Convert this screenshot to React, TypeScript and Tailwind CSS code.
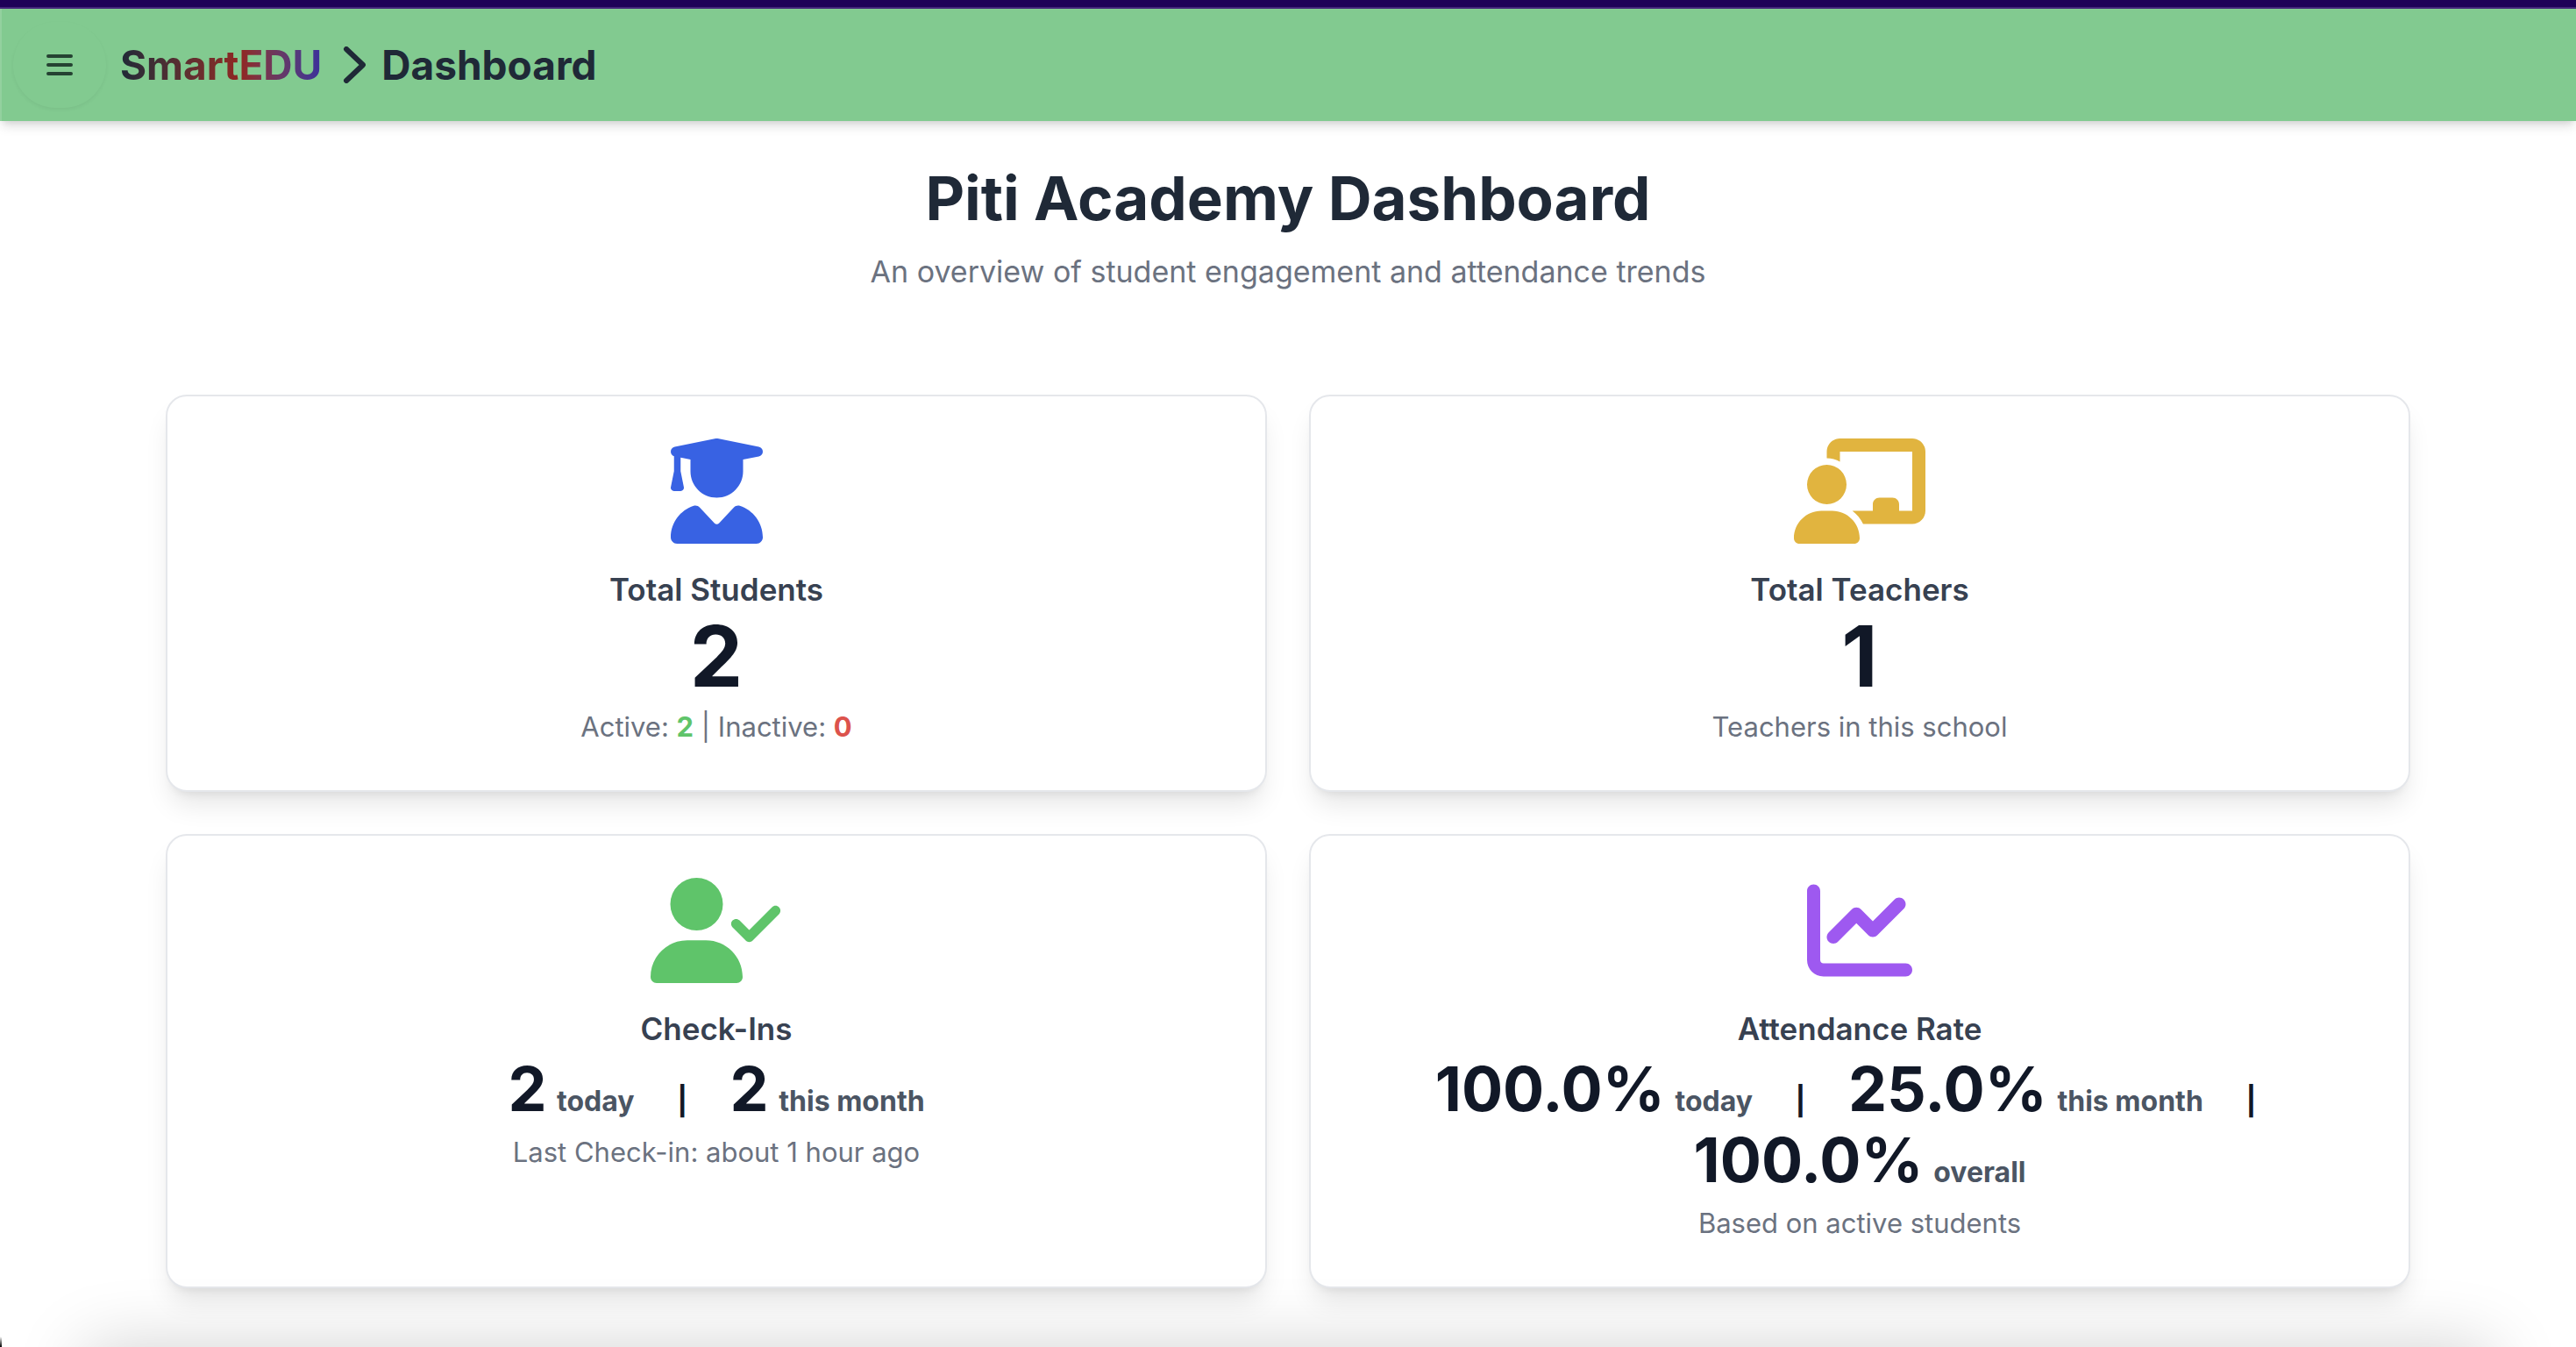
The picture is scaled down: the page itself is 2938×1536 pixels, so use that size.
import type { ReactNode } from "react";
import { FaUserGraduate, FaChalkboardUser, FaUserCheck, FaChartLine } from "react-icons/fa6";

function StatCard({ icon, title, children, note }: { icon: ReactNode; title: string; children: ReactNode; note: ReactNode }) {
  return (
    <section className="flex flex-col items-center rounded-3xl border-2 border-gray-200 bg-white p-12 text-center shadow-[0_20px_30px_-6px_rgba(0,0,0,0.1),0_8px_12px_-8px_rgba(0,0,0,0.1)]">
      {icon}
      <h2 className="mt-6 text-[35px] leading-[56px] font-semibold text-[#374151]">{title}</h2>
      {children}
      <p className="mt-2 text-[31px] leading-[48px] text-[#6b7280]">{note}</p>
    </section>
  );
}

function Label({ children }: { children: ReactNode }) {
  return <span className="ml-1 text-[32px] leading-none text-[#4b5563]"> {children}</span>;
}

function Divider() {
  return <span className="mx-8 text-[32px] leading-none">|</span>;
}

export default function App() {
  return (
    <div className="relative min-h-screen overflow-hidden bg-white font-['Inter',sans-serif]">
      <div className="h-[10px] border-b-2 border-[#43267a] bg-[#1e0057]" />
      <header className="flex h-32 items-center border-l-2 border-[#93d19f] bg-[#82ca90] pl-[13px] shadow-[0_8px_12px_-2px_rgba(0,0,0,0.12),0_4px_8px_-4px_rgba(0,0,0,0.12)]">
        <button
          type="button"
          aria-label="Open menu"
          className="flex h-[98px] w-[106px] items-center justify-center rounded-full shadow-[0_2px_4px_rgba(0,0,0,0.05)]"
        >
          <svg viewBox="0 0 30 24" className="h-6 w-[30px]" fill="none" stroke="#254232" strokeWidth="4" strokeLinecap="round">
            <path d="M2 2h26M2 12h26M2 22h26" />
          </svg>
        </button>
        <nav aria-label="Breadcrumb" className="flex items-center pl-4 text-[46px] leading-[64px] font-bold text-[#1f2937]">
          <a href="#home" className="bg-linear-to-r from-[#1f2937] via-[#902722] via-60% to-[#3b2f9c] bg-clip-text text-transparent">
            SmartEDU
          </a>
          <svg viewBox="0 0 26 42" className="mr-[18px] ml-6 h-[42px] w-[26px]" fill="none" stroke="currentColor" strokeWidth="6" strokeLinecap="round" strokeLinejoin="round">
            <path d="M4 3L23 21L4 39" />
          </svg>
          <h1>Dashboard</h1>
        </nav>
      </header>

      <main className="px-[189px] pt-12 pb-16">
        <div className="text-center">
          <h2 className="text-[69px] leading-[80px] font-bold text-[#1f2937]">Piti Academy Dashboard</h2>
          <p className="mt-4 text-[34px] leading-[56px] text-[#6b7280]">An overview of student engagement and attendance trends</p>
        </div>

        <div className="mt-28 grid grid-cols-2 gap-12">
          <StatCard
            icon={<FaUserGraduate className="h-[120px] w-[105px] text-[#3862e3]" />}
            title="Total Students"
            note={
              <>
                Active: <span className="font-bold text-[#5fc46a]">2</span> | Inactive: <span className="font-bold text-[#dc534c]">0</span>
              </>
            }
          >
            <p className="text-[96px] leading-[97px] font-bold text-[#111827]">2</p>
          </StatCard>
          <StatCard
            icon={<FaChalkboardUser className="h-[120px] w-[150px] text-[#e1b43f]" />}
            title="Total Teachers"
            note="Teachers in this school"
          >
            <p className="text-[96px] leading-[97px] font-bold text-[#111827]">1</p>
          </StatCard>
          <StatCard
            icon={<FaUserCheck className="h-[120px] w-[150px] text-[#5fc46a]" />}
            title="Check-Ins"
            note="Last Check-in: about 1 hour ago"
          >
            <p className="text-[70px] leading-[81px] font-bold text-[#111827]">
              2<Label>today</Label> <Divider /> 2<Label>this month</Label>
            </p>
          </StatCard>
          <StatCard
            icon={<FaChartLine className="size-[120px] text-[#9e59f0]" />}
            title="Attendance Rate"
            note="Based on active students"
          >
            <p className="text-[70px] leading-[81px] font-bold text-[#111827]">
              100.0%<Label>today</Label> <Divider /> 25.0%<Label>this month</Label> <Divider /> 100.0%<Label>overall</Label>
            </p>
          </StatCard>
        </div>
      </main>
      <div className="pointer-events-none absolute inset-x-24 top-full h-24 shadow-[0_0_80px_rgba(0,0,0,0.18)]" />
      <div className="pointer-events-none absolute bottom-0 left-0 h-3 w-[2px] rounded-tr-full bg-linear-to-t from-black to-transparent" />
    </div>
  );
}
